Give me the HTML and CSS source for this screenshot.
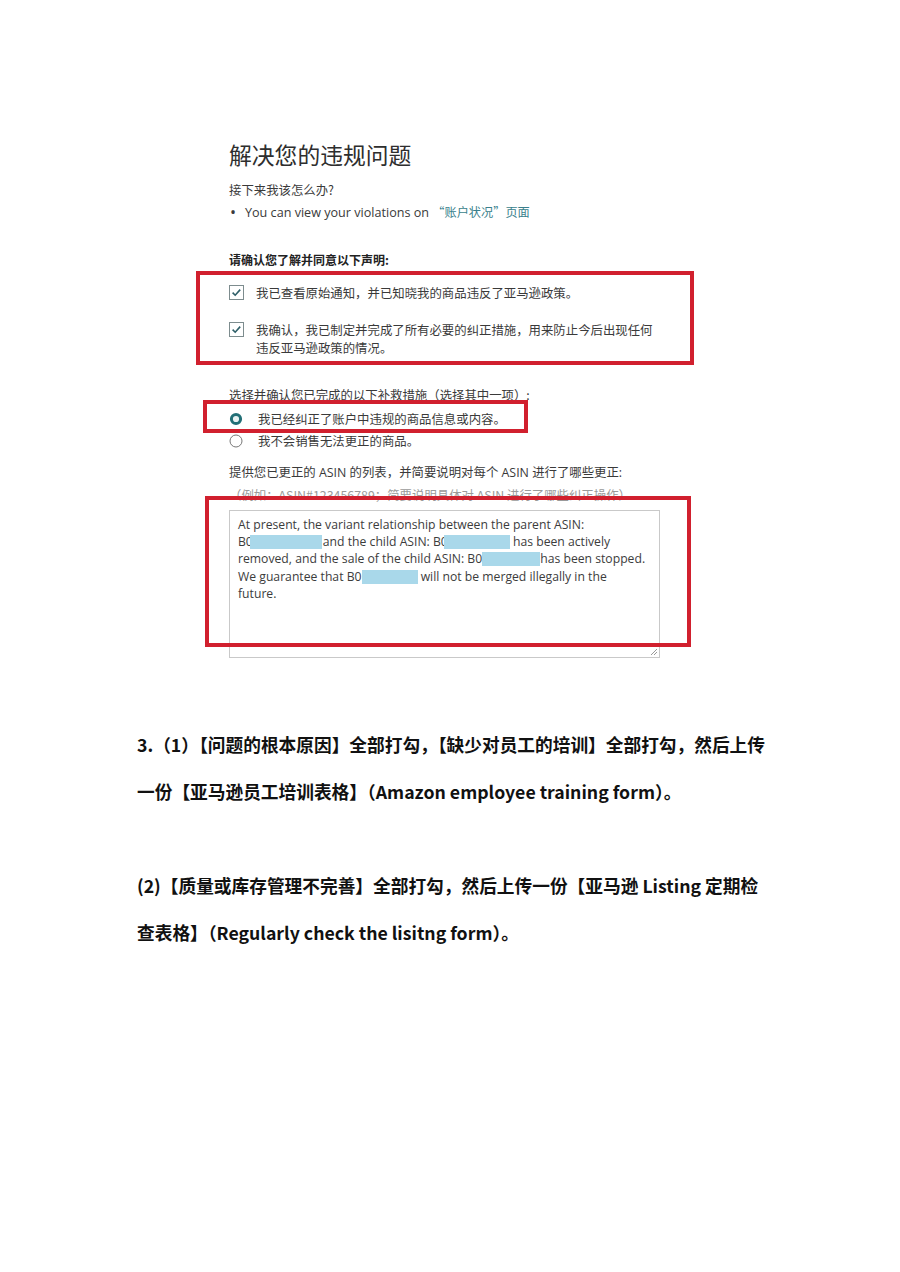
FILE: index.html
```html
<!DOCTYPE html>
<html lang="zh-CN">
<head>
<meta charset="utf-8">
<title>解决您的违规问题</title>
<link rel="stylesheet" href="styles.css">
</head>
<body>
<div class="page">
  <section class="shot">
    <h1 class="title">解决您的违规问题</h1>
    <p class="line q">接下来我该怎么办?</p>
    <ul class="bullets">
      <li><span class="dot">•</span>You can view your violations on <span class="link">“账户状况”页面</span></li>
    </ul>
    <p class="line bold confirm">请确认您了解并同意以下声明:</p>

    <div class="check c1">
      <svg class="box" width="15" height="15" viewBox="0 0 15 15"><rect x="0.5" y="0.5" width="14" height="14" fill="#fff" stroke="#7d8c8e"/><path d="M3.6 7.6 L6.2 10.2 L11.2 4.6" fill="none" stroke="#2e5f68" stroke-width="1.6"/></svg>
      <span class="ctext">我已查看原始通知，并已知晓我的商品违反了亚马逊政策。</span>
    </div>
    <div class="check c2">
      <svg class="box" width="15" height="15" viewBox="0 0 15 15"><rect x="0.5" y="0.5" width="14" height="14" fill="#fff" stroke="#7d8c8e"/><path d="M3.6 7.6 L6.2 10.2 L11.2 4.6" fill="none" stroke="#2e5f68" stroke-width="1.6"/></svg>
      <span class="ctext">我确认，我已制定并完成了所有必要的纠正措施，用来防止今后出现任何<br>违反亚马逊政策的情况。</span>
    </div>

    <p class="line choose">选择并确认您已完成的以下补救措施（选择其中一项）:</p>
    <div class="radio r-on">
      <svg class="rd" width="14" height="14" viewBox="0 0 14 14"><circle cx="7" cy="7" r="4.6" fill="#e8f2f2" stroke="#226f76" stroke-width="3"/></svg>
      <span class="rtext">我已经纠正了账户中违规的商品信息或内容。</span>
    </div>
    <div class="radio r-off">
      <svg class="rd" width="14" height="14" viewBox="0 0 14 14"><circle cx="7" cy="7" r="6" fill="#fff" stroke="#777" stroke-width="1"/></svg>
      <span class="rtext">我不会销售无法更正的商品。</span>
    </div>

    <p class="line provide">提供您已更正的 ASIN 的列表，并简要说明对每个 ASIN 进行了哪些更正:</p>
    <p class="line hint">（例如：ASIN#123456789；简要说明具体对 ASIN 进行了哪些纠正操作）</p>

    <div class="textarea">
      <p class="ta">At present, the variant relationship between the parent ASIN:<br>B0<span class="mask m1"></span>and the child ASIN: B0<span class="mask m2"></span> has been actively<br>removed, and the sale of the child ASIN: B0<span class="mask m3"></span>has been stopped.<br>We guarantee that B0<span class="mask m4"></span> will not be merged illegally in the<br>future.</p>
      <svg class="grip" width="9" height="9" viewBox="0 0 9 9"><path d="M8 2 L2 8 M8 5 L5 8" stroke="#999" stroke-width="1"/></svg>
    </div>

    <div class="redbox rb1"></div>
    <div class="redbox rb2"></div>
    <div class="redbox rb3"></div>
  </section>

  <section class="notes">
    <p>3.（1）【问题的根本原因】全部打勾，【缺少对员工的培训】全部打勾，然后上传<br>一份【亚马逊员工培训表格】（Amazon employee training form）。</p>
    <p>(2)【质量或库存管理不完善】全部打勾，然后上传一份【亚马逊 Listing 定期检<br>查表格】（Regularly check the lisitng form）。</p>
  </section>
</div>
</body>
</html>
```

FILE: styles.css
```css
* { box-sizing: border-box; }
html, body { margin: 0; padding: 0; background: #fff; }
.page { width: 900px; min-height: 1272px; }

.shot {
  position: relative;
  padding: 140px 0 0 229px;
  font-family: "Open Sans", "Noto Sans CJK SC", sans-serif;
  color: #3a3a3a;
  font-size: 12.4px;
}
.title {
  margin: 0;
  font-family: "Noto Sans CJK SC", sans-serif;
  font-weight: 400;
  font-size: 22.8px;
  line-height: 30px;
  color: #2e2e2e;
}
.line { margin: 0; line-height: 20px; }
.q { margin-top: 10px; font-family: "Noto Sans CJK SC", sans-serif; }
.bullets { margin: 2px 0 0; padding: 0; list-style: none; line-height: 20px; font-size: 12.6px; }
.dot { display: inline-block; width: 16px; padding-left: 1px; font-size: 16px; line-height: 16px; vertical-align: -1px; }
.link { color: #3a7f8c; font-family: "Noto Sans CJK SC", sans-serif; font-size: 12.2px; }
.bold { font-weight: 700; font-family: "Noto Sans CJK SC", sans-serif; color: #222; font-size: 12px; }
.confirm { margin-top: 27px; }

.check { display: flex; align-items: flex-start; font-family: "Noto Sans CJK SC", sans-serif; }
.check .box { flex: none; }
.ctext { margin-left: 12px; line-height: 18px; }
.c1 { margin-top: 13px; }
.c1 .ctext { line-height: 20px; }
.c1 .box { margin-top: 2px; }
.c2 { margin-top: 18px; }
.c2 .box { margin-top: 1px; }

.choose { margin-top: 28px; font-family: "Noto Sans CJK SC", sans-serif; }
.radio { display: flex; align-items: center; height: 20px; font-family: "Noto Sans CJK SC", sans-serif; }
.rd { flex: none; }
.rtext { margin-left: 15px; }
.r-on { margin-top: 4px; }
.r-off { margin-top: 2px; }

.provide { margin-top: 12px; }
.hint { margin-top: 2px; color: #9a9a9a; font-family: "Noto Sans CJK SC", sans-serif; }

.textarea {
  position: relative;
  margin-top: 5px;
  width: 431px;
  height: 148px;
  border: 1px solid #c9c9c9;
  padding: 5px 8px;
}
.ta { margin: 0; line-height: 17.2px; font-size: 12.2px; color: #3c3c3c; }
.mask {
  display: inline-block;
  height: 14px;
  vertical-align: -3px;
  background: #a9d8ea;
}
.m1 { width: 72px; margin-left: -3px; margin-right: 1px; }
.m2 { width: 66px; margin-left: -4px; }
.m3 { width: 58px; margin-left: 0; }
.m4 { width: 56px; margin-left: 0; }
.grip { position: absolute; right: 1px; bottom: 1px; }

.redbox { position: absolute; border: 4px solid #d1202e; }
.rb1 { left: 196px; top: 271px; width: 498px; height: 94px; }
.rb2 { left: 203px; top: 400px; width: 325px; height: 33px; }
.rb3 { left: 205px; top: 496px; width: 486px; height: 151px; }

.notes {
  padding: 63px 0 0 137px;
  font-family: "Noto Sans CJK SC", sans-serif;
  font-weight: 700;
  font-size: 17.7px;
  line-height: 47px;
  color: #111;
}
.notes p { margin: 0 0 47px; }
```
